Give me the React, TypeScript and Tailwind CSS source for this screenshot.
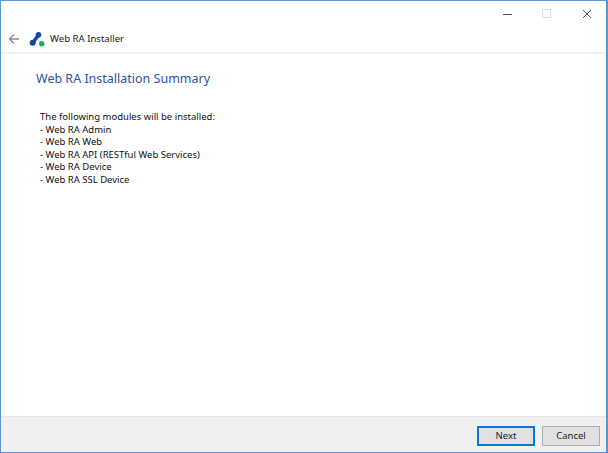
export default function App() {
  return (
    <div className="w-[608px] h-[453px] flex flex-col bg-white border-t border-l border-r-2 border-b border-[#5b94d8] font-['Noto_Sans','Open_Sans',sans-serif] overflow-hidden">
      <div className="h-[53px] shrink-0 flex flex-col border-b-2 border-[#f0f0f0]">
        <div className="h-[25px] flex justify-end items-center">
          <svg width="10" height="10" viewBox="0 0 10 10" className="mr-[29px]"><path d="M0 5.5H9" stroke="#555" strokeWidth="1" fill="none" /></svg>
          <svg width="10" height="10" viewBox="0 0 10 10" className="mr-[30px]"><rect x="0.5" y="0.5" width="8" height="8" stroke="#dcdcdc" strokeWidth="1" fill="none" /></svg>
          <svg width="10" height="10" viewBox="0 0 10 10" className="mr-[14px]"><path d="M1 1L9 9M9 1L1 9" stroke="#555" strokeWidth="1" fill="none" /></svg>
        </div>
        <div className="flex items-center h-[26px]">
          <svg width="12" height="12" viewBox="0 0 12 12" className="ml-[7px]"><path d="M11 6H1.5M6 1.5L1.5 6L6 10.5" stroke="#8a8a8a" strokeWidth="1.4" fill="none" /></svg>
          <svg width="16" height="16" viewBox="0 0 16 16" className="ml-[9px]">
            <path d="M4 11.5L9.5 4" stroke="#0f4aa0" strokeWidth="3.6" strokeLinecap="round" fill="none" />
            <circle cx="3.7" cy="11.7" r="3" fill="#0f4aa0" />
            <circle cx="9.5" cy="3.7" r="2.8" fill="#0f4aa0" />
            <circle cx="12.7" cy="12.7" r="2.7" fill="#10b060" />
          </svg>
          <span className="ml-[5px] text-[9.6px] leading-none text-[#222]">Web RA Installer</span>
        </div>
      </div>
      <div className="flex-1 min-h-0">
        <h1 className="ml-[35px] mt-[16px] text-[12.5px] leading-[18px] font-normal text-[#2f50a8]">Web RA Installation Summary</h1>
        <div className="ml-[39px] mt-[23px] text-[9.5px] leading-[12.6px] text-[#111]">
          <div>The following modules will be installed:</div>
          <div>- Web RA Admin</div>
          <div>- Web RA Web</div>
          <div>- Web RA API (RESTful Web Services)</div>
          <div>- Web RA Device</div>
          <div>- Web RA SSL Device</div>
        </div>
      </div>
      <div className="h-[36px] shrink-0 bg-[#f0f0f0] border-t border-[#e6e6e6] flex items-start justify-end gap-[7px] pt-[9px] pr-[6px]">
        <button className="w-[58px] h-[20px] bg-[#e1e1e1] border-2 border-[#0a78d7] text-[9.5px] leading-none text-[#222]">Next</button>
        <button className="w-[58px] h-[20px] bg-[#e1e1e1] border border-[#adadad] text-[9.5px] leading-none text-[#222]">Cancel</button>
      </div>
    </div>
  );
}
